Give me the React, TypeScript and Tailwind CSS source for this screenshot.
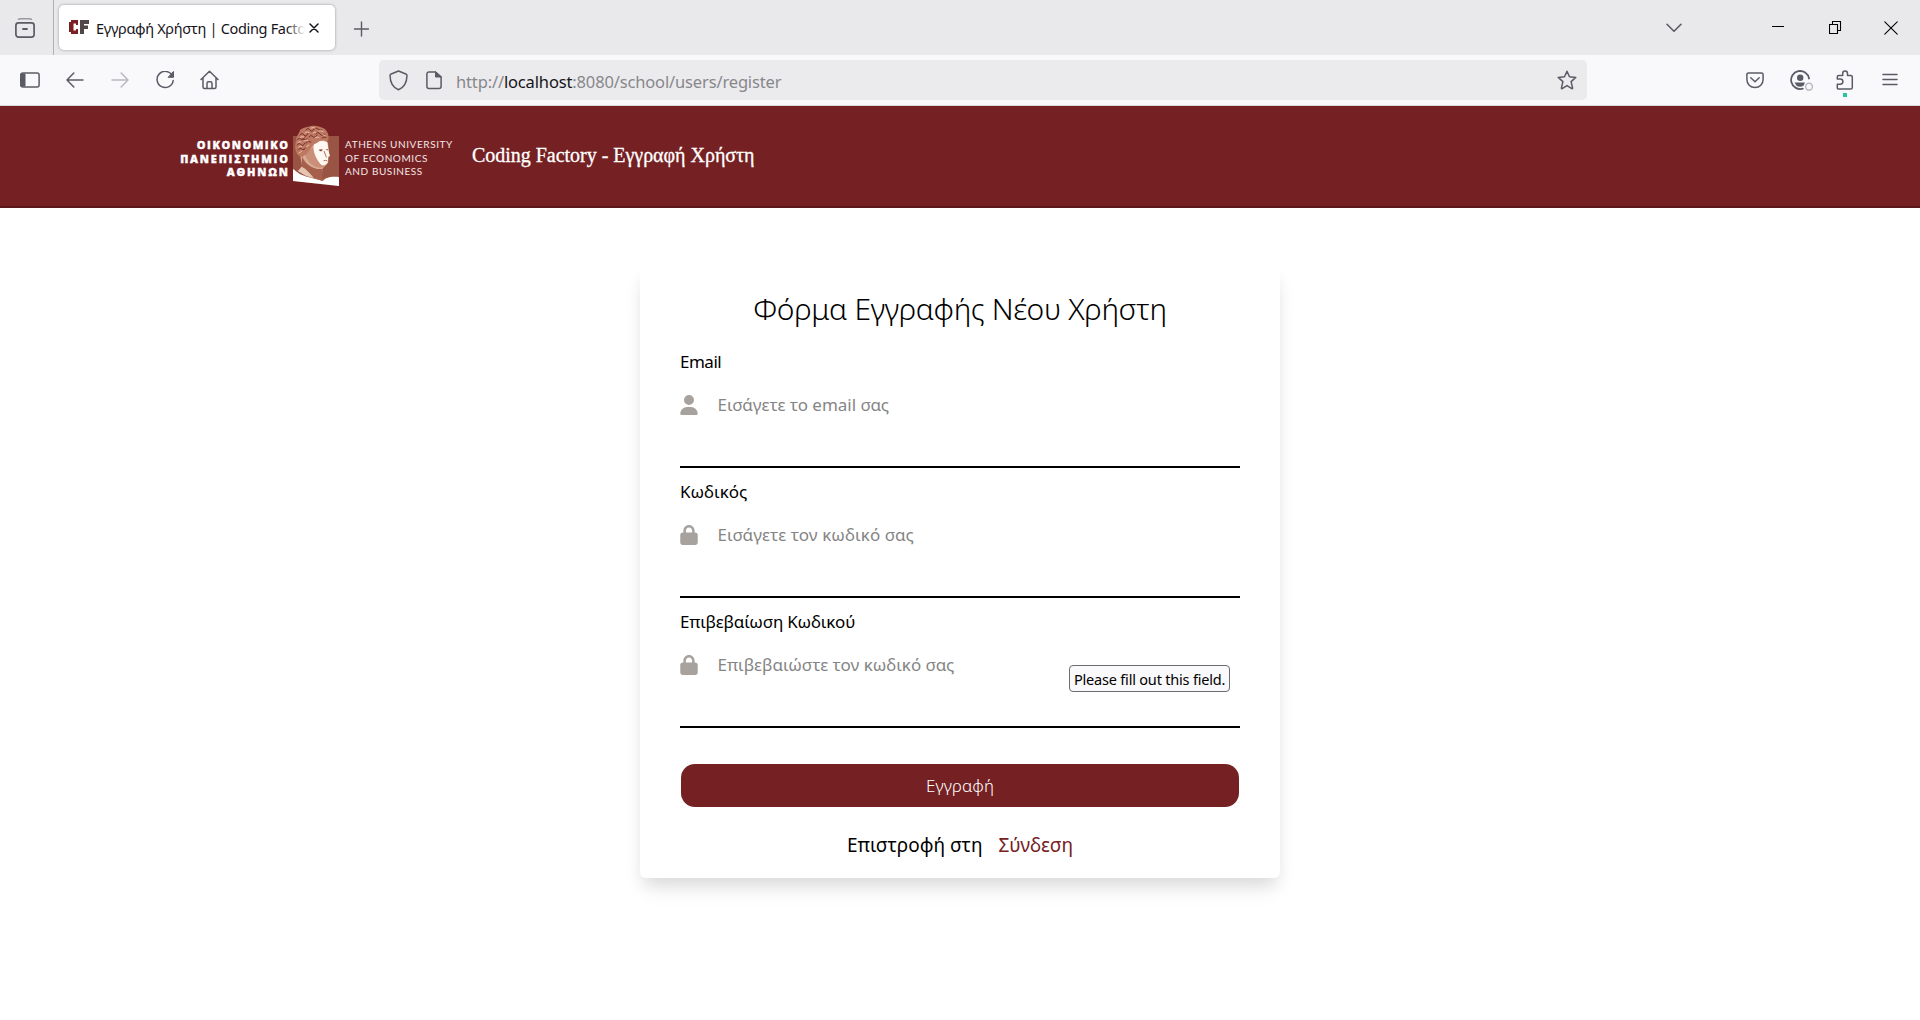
import React from "react";

const ui = "font-['Noto_Sans','Open_Sans',sans-serif]";

function Svg({ w, h, className = "", children }: { w: number; h: number; className?: string; children: React.ReactNode }) {
  return (
    <svg width={w} height={h} viewBox={`0 0 ${w} ${h}`} fill="none" stroke="currentColor" strokeWidth="1.5" strokeLinecap="round" strokeLinejoin="round" className={`block shrink-0 ${className}`}>
      {children}
    </svg>
  );
}

function TabBar() {
  return (
    <div className="flex h-[55px] bg-[#e9e9eb] text-[#5b5b66]">
      <div className="flex w-[54px] shrink-0 border-r border-[#b0b0b5] pl-[15px] pt-[18px]">
        <Svg w={20} h={20}>
          <path d="M3.5 1.3C4 .9 4.700.8 5.500.8h9c.8 0 1.500.1 2 .5" stroke="#9a9aa2" />
          <rect x="0.9" y="4.9" width="18.2" height="14.2" rx="2.6" strokeWidth="1.7" />
          <path d="M8 11h4" strokeWidth="1.8" />
        </Svg>
      </div>
      <div className="ml-[5px] mt-[5px] flex h-[45px] w-[276px] shrink-0 rounded-[5px] bg-white pl-[10px] shadow-[0_0_3px_rgba(0,0,0,0.35)]">
        <svg width="20" height="15" viewBox="0 0 20 15" className="mt-[15px] block shrink-0">
          <path d="M2 0H9V5H7V3.5H4.5V10.5H7V9H9V14H2V12H0V2H2Z" fill="#7b1f24" />
          <path d="M11 0H20V4H15V5.5H19V9H15V14H11Z" fill="#504848" />
        </svg>
        <div className="relative ml-[6px] w-[210px] overflow-hidden">
          <div className={`${ui} whitespace-nowrap pl-[1px] text-[14.5px] leading-[47px] tracking-[-0.32px] text-[#15141a]`}>Εγγραφή Χρήστη | Coding Facto</div>
          <div className="absolute inset-y-0 right-0 w-[18px] bg-linear-to-r from-white/0 to-white" />
        </div>
        <Svg w={10} h={10} className="ml-[4px] mt-[18px] text-[#15141a]">
          <path d="M1 1l8 8M9 1L1 9" />
        </Svg>
      </div>
      <Svg w={16} h={16} className="ml-[18px] mt-[21px]">
        <path d="M8.500 1v14M1.500 8h14" strokeWidth="1.4" />
      </Svg>
      <div className="flex-1" />
      <Svg w={16} h={10} className="mr-[90px] mt-[23px]">
        <path d="M1 1.3l7 7 7-7" strokeWidth="1.6" />
      </Svg>
      <Svg w={12} h={2} className="mr-[45px] mt-[26px] text-black">
        <path d="M0 .5h12" strokeWidth="1" strokeLinecap="butt" />
      </Svg>
      <Svg w={13} h={13} className="mr-[42px] mt-[21px] text-black">
        <path d="M.5 3.5h8v9h-8zM3.5 3.5v-3h8v9h-3" strokeWidth="1.1" strokeLinejoin="miter" />
      </Svg>
      <Svg w={14} h={14} className="mr-[22px] mt-[21px] text-black">
        <path d="M.8.8l12.4 12.4M13.2.8L.8 13.2" strokeWidth="1.1" />
      </Svg>
    </div>
  );
}

function NavBar() {
  return (
    <div className="flex h-[51px] border-b border-[#d8d8de] bg-[#f9f9fb] text-[#5b5b66]">
      <Svg w={20} h={16} className="ml-[20px] mt-[17px]">
        <rect x=".9" y=".9" width="18.2" height="14.2" rx="2" />
        <path d="M1 2h4v12H1z" fill="currentColor" strokeWidth="1" />
      </Svg>
      <Svg w={18} h={16} className="ml-[26px] mt-[17px]">
        <path d="M17 8H1M7.8 1L1 8l6.800 7" />
      </Svg>
      <Svg w={18} h={16} className="ml-[27px] mt-[17px] text-[#b9b9bf]">
        <path d="M1 8h16M10.200 1L17 8l-6.800 7" />
      </Svg>
      <Svg w={19} h={19} className="ml-[27px] mt-[16px]">
        <path d="M16.500 5A8.100 8.100 0 1 0 17.200 9.500" />
        <path d="M17.500 .8V6.300H12.500z" fill="currentColor" strokeWidth="1" />
      </Svg>
      <Svg w={20} h={20} className="ml-[25px] mt-[15px]">
        <path d="M1 9.500L9.500 1.200 18 9.500M3 8v9c0 .9.500 1.500 1.500 1.500h10c1 0 1.500-.6 1.500-1.500V8M7 18.500v-5c0-1 .6-1.700 1.500-1.700h2c.9 0 1.500.7 1.500 1.700v5" />
      </Svg>
      <div className="ml-[159px] mt-[5px] flex h-[40px] w-[1208px] shrink-0 rounded-[5px] bg-[#ebebed]">
        <Svg w={19} h={21} className="ml-[10px] mt-[10px]">
          <path d="M9.500 1L17.400 4.300c.4.200.6.500.6.900C17.900 11.500 15.500 17.300 9.500 19.800 3.500 17.300 1.100 11.500 1 5.200c0-.4.2-.7.600-.9z" />
        </Svg>
        <Svg w={16} h={19} className="ml-[18px] mt-[11px]">
          <path d="M9.500 1H3C1.700 1 .9 1.800.9 3v12.500c0 1.200.8 2 2.100 2h10c1.300 0 2.100-.8 2.100-2V6z" />
          <path d="M9.500 1v5h5.600z" fill="currentColor" strokeWidth="1" />
        </Svg>
        <div className={`${ui} ml-[14px] flex-1 text-[16.500px] leading-[43px] tracking-[-0.15px] text-[#87878c]`}>
          http://<span className="text-[#15141a]">localhost</span>:8080/school/users/register
        </div>
        <Svg w={20} h={20} className="mr-[10px] mt-[10px]">
          <path d="M10 1.200l2.500 5.600 6.300.6-4.700 4.200 1.500 6.500c0 .5-.4.700-.8.500L10 15.600 5.200 18.600c-.4.200-.8 0-.8-.5l1.500-6.500L1.200 7.400l6.300-.6z" />
        </Svg>
      </div>
      <Svg w={18} h={17} className="ml-[159px] mt-[17px]">
        <path d="M2.600.9h12.800c1 0 1.700.7 1.700 1.700V7.500c0 4.700-3.400 8.100-8.100 8.100S.9 12.200.9 7.500V2.600C.9 1.600 1.600.9 2.600.9zM4.800 5.800L9 9.800l4.200-4" />
      </Svg>
      <Svg w={24} h={21} className="ml-[26px] mt-[15px]">
        <path d="M19 8.500A9 9 0 1 0 12.800 18.600" strokeWidth="1.800" />
        <circle cx="10.200" cy="7.700" r="3.200" fill="currentColor" stroke="none" />
        <path d="M4.500 12.500h10.500l-1.500 3.200c-2 1.500-5 1.500-7 0z" fill="currentColor" stroke="none" />
        <circle cx="19" cy="16.700" r="3.400" stroke="#b9b9bf" />
      </Svg>
      <div className="ml-[21px] mt-[15px] flex w-[20px] shrink-0 flex-col items-center">
        <Svg w={18} h={21}>
          <path d="M1.300 9V7c0-.9.500-1.400 1.400-1.400h4V3.400a2.400 2.400 0 0 1 4.800 0v2.200h3.300c1 0 1.500.5 1.500 1.400v10.700c0 .9-.5 1.400-1.500 1.400H2.700c-.9 0-1.400-.5-1.400-1.400V14.200h3a2.600 2.600 0 0 0 0-5.200z" />
        </Svg>
        <div className="mt-[2px] h-[4px] w-[4px] bg-[#2ac3a2]" />
      </div>
      <Svg w={16} h={14} className="ml-[27px] mt-[18px]">
        <path d="M1 1.500h14M1 6.500h14M1 11.500h14" />
      </Svg>
    </div>
  );
}

function Bust() {
  return (
    <svg width="48" height="62" viewBox="0 0 48 62" className="block shrink-0">
      <path d="M1 11H47V61L1 56Z" fill="#9a5443" />
      <path d="M1 44C5 47 8 50 16 52L31 56C33 53 38 51 47 52V61L1 56Z" fill="#fff" />
      <path d="M8 26C8 33 10 38 10 41L6 46 16 51 31 56C29 52 30 48 31 43L36 38 37 28 36 18 33 13 17 13Z" fill="#d9ab95" />
      <path d="M22 19C26 16 30 15 35 17 36 20 36 23 36.500 26L38 31 36 32 36 36C35 40 32 41 29 40 25 38 22 33 21 28Z" fill="#fff8f2" />
      <path d="M21 22C22 29 25 36 30 40.500L33 41C31 43 27 43 24 42 19 40 15 35 13 30Z" fill="#c98f78" />
      <path d="M10 31C12 37 17 42 25 44L31 44C30 48 30 52 31 56L22 53C19 49 14 45 10 42Z" fill="#a65f4a" />
      <path d="M10 42C14 44 18 48 21 53L13 50.500 6 46Z" fill="#e6c4b2" />
      <path d="M6 30C3 26 2.500 21 4 16 4 11 7 9 8 5 12 2 16 2 19 1 24 0 28 2 31 3 35 5 37 9 36.500 14L35 17C32 15 28 15 25 18 21 19 20 22 18 25 16 28 13 30 10 32Z" fill="#bd7861" />
      <g fill="none" stroke="#74292a" strokeWidth=".9" strokeLinecap="round">
        <path d="M5 20q2-3 4-.5t4-1.500M5 15q2-3 4-1t4-2M8 10q2-3 4 0t4-2M14 5q2-3 4 0t4-1M22 4q2-2 4 0t4 1M24 9q2-3 4 0t5 0M17 12q2-3 4-.5t4-1.500M6 25q2-3 4-1t4-2M14 18q2-3 5-1M30 13q2-2 4-.5M11 14q2 2 4 0" />
      </g>
      <g fill="none" stroke="#efc6b1" strokeWidth=".9" strokeLinecap="round">
        <path d="M6 17.500q2-2 3-.5M8 12.500q2-2 4-.5M13 8q2-2 4-.5M19 3q2-1 4 0M27 6q2-1 4 .5M7 22q2-2 3-.5M12 16q2-2 4-.5M21 8q2-2 3-.5M23 13q2-2 4-.5M31 10l2 .5M7 28q2-1 3-2M14 22l3-2" />
      </g>
      <path d="M26.500 25q2.500-1.500 4.500-.2l-2 1.600zM33.500 24.500l2.500-.4-.5 1.500z" fill="#8d4538" />
      <path d="M32 26l2.500 6.500M31.500 35.800q2-.8 3.800 0" fill="none" stroke="#a65f4a" strokeWidth=".9" />
    </svg>
  );
}

function Header() {
  return (
    <header className="flex h-[102px] border-b-2 border-[#5c181c] bg-[#752124] text-white">
      <div className="ml-[168px] mt-[32px] flex w-[120px] shrink-0 flex-col items-end whitespace-nowrap font-['Open_Sans',sans-serif] text-[11px] font-extrabold leading-[13.500px] [-webkit-text-stroke:0.3px_white]">
        <span className="tracking-[1.5px] -mr-[1.5px]">ΟΙΚΟΝΟΜΙΚΟ</span>
        <span className="tracking-[1.8px] -mr-[1.8px]">ΠΑΝΕΠΙΣΤΗΜΙΟ</span>
        <span className="tracking-[1.8px] -mr-[1.8px]">ΑΘΗΝΩΝ</span>
      </div>
      <div className="ml-[4px] mt-[19px]"><Bust /></div>
      <div className="ml-[5px] mt-[32px] w-[127px] shrink-0 whitespace-nowrap font-['Lato',sans-serif] text-[10px] leading-[13.500px] tracking-[0.58px] text-[#f3e6e4]">
        <div>ATHENS UNIVERSITY</div>
        <div>OF ECONOMICS</div>
        <div>AND BUSINESS</div>
      </div>
      <h1 className="mt-[34px] whitespace-nowrap font-['Liberation_Serif',serif] text-[20px] leading-[30px] tracking-[-0.02px] [-webkit-text-stroke:0.3px_white]">Coding Factory - Εγγραφή Χρήστη</h1>
    </header>
  );
}

function UserIcon() {
  return (
    <svg width="18" height="20" viewBox="0 0 448 512" fill="#a8a29e" className="block shrink-0">
      <path d="M224 256a128 128 0 1 0 0-256 128 128 0 1 0 0 256zm-45.700 48C79.800 304 0 383.800 0 482.300 0 498.700 13.300 512 29.700 512h388.600c16.400 0 29.700-13.300 29.700-29.700 0-98.500-79.800-178.300-178.300-178.300z" />
    </svg>
  );
}

function LockIcon() {
  return (
    <svg width="18" height="20" viewBox="0 0 448 512" fill="#a8a29e" className="block shrink-0">
      <path d="M144 144v48h160v-48c0-44.200-35.800-80-80-80s-80 35.800-80 80zm-64 48v-48C80 64.500 144.500 0 224 0s144 64.500 144 144v48h16c35.300 0 64 28.700 64 64v192c0 35.300-28.700 64-64 64H64c-35.300 0-64-28.700-64-64V256c0-35.300 28.700-64 64-64z" />
    </svg>
  );
}

function Field({ label, placeholder, icon, labelClass, textClass, tip }: { label: string; placeholder: string; icon: React.ReactNode; labelClass: string; textClass: string; tip?: string }) {
  return (
    <div className="relative h-[130px] border-b-2 border-black pt-[10px]">
      <div className={`h-[28px] whitespace-nowrap text-[17px] leading-[28px] ${labelClass}`}>{label}</div>
      <div className="mt-[15px] flex h-[28px] items-center">
        {icon}
        <span className={`ml-[19.500px] whitespace-nowrap text-[17px] leading-[28px] text-[#858585] ${textClass}`}>{placeholder}</span>
      </div>
      {tip && (
        <div className="absolute left-[389px] top-[67px] h-[27px] w-[161px] whitespace-nowrap rounded-[4px] border border-[#6b6b70] bg-[#f9f9fb] pl-[4px] text-[14.500px] leading-[27px] tracking-[-0.2px]">{tip}</div>
      )}
    </div>
  );
}

export default function App() {
  return (
    <div className="flex h-[1020px] w-[1920px] flex-col overflow-hidden bg-white">
      <TabBar />
      <NavBar />
      <Header />
      <main className="flex flex-1 justify-center pt-[58px]">
        <section className={`${ui} h-[612px] w-[640px] rounded-[6px] bg-white px-[40px] text-black shadow-[0_10px_15px_-3px_rgba(0,0,0,0.09),0_14px_24px_-4px_rgba(0,0,0,0.07)]`}>
          <h2 className="mt-[21px] h-[51px] whitespace-nowrap text-center text-[30px] font-light leading-[44px] tracking-[-0.35px]">Φόρμα Εγγραφής Νέου Χρήστη</h2>
          <Field label="Email" placeholder="Εισάγετε το email σας" icon={<UserIcon />} labelClass="tracking-[-0.5px]" textClass="tracking-[-0.03px]" />
          <Field label="Κωδικός" placeholder="Εισάγετε τον κωδικό σας" icon={<LockIcon />} labelClass="" textClass="tracking-[0.08px]" />
          <Field label="Επιβεβαίωση Κωδικού" placeholder="Επιβεβαιώστε τον κωδικό σας" icon={<LockIcon />} labelClass="tracking-[-0.2px]" textClass="tracking-[-0.02px]" tip="Please fill out this field." />
          <button className="mx-[1px] mt-[36px] block h-[43px] w-[558px] rounded-[14px] bg-[#752124] text-[17px] font-light leading-[44px] tracking-[0.1px] text-white">Εγγραφή</button>
          <div className="mt-[22px] flex justify-center gap-[16px] text-[19px] leading-[32px]">
            <span>Επιστροφή στη</span>
            <a className="text-[#752124]">Σύνδεση</a>
          </div>
        </section>
      </main>
    </div>
  );
}
